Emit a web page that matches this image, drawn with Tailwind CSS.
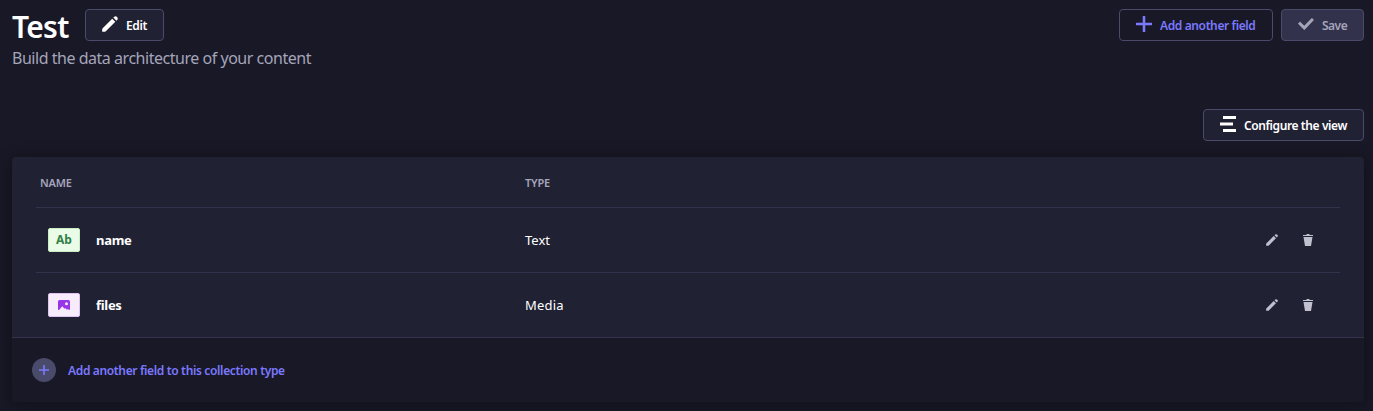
<!DOCTYPE html>
<html lang="en">
<head>
<meta charset="utf-8">
<title>Test</title>
<script src="https://cdn.jsdelivr.net/npm/@tailwindcss/browser@4"></script>
</head>
<body class="bg-[#181826] font-['Noto_Sans','Open_Sans',sans-serif] text-white h-[411px] overflow-hidden">
<svg class="hidden">
  <symbol id="pencil" viewBox="0 0 16 16"><path d="M12.300 .7a2.150 2.150 0 0 1 3 3l-.9 1-3.100-3.100 1-.9ZM10.200 2.700l3.100 3.100L3.800 15.300 3 15.800H.2V13l.5-.8 9.500-9.500Z"/></symbol>
  <symbol id="plus" viewBox="0 0 24 24"><path d="M24 13.604a.3.3 0 0 1-.3.3h-9.795V23.7a.3.3 0 0 1-.3.3h-3.21a.3.3 0 0 1-.3-.3v-9.795H.3a.3.3 0 0 1-.3-.3v-3.21a.3.3 0 0 1 .3-.3h9.795V.3a.3.3 0 0 1 .3-.3h3.21a.3.3 0 0 1 .3.3v9.795H23.7a.3.3 0 0 1 .3.3v3.21Z"/></symbol>
  <symbol id="trash" viewBox="0 0 24 24"><path d="M3.236 6.149a.2.2 0 0 0-.197.233L6 24h12l2.96-17.618a.2.2 0 0 0-.196-.233H3.236ZM21.8 1.983c.11 0 .2.09.2.2v1.584a.2.2 0 0 1-.2.2H2.2a.2.2 0 0 1-.2-.2V2.183c0-.11.09-.2.2-.2h5.511c.9 0 1.631-1.09 1.631-1.983h5.316c0 .894.73 1.983 1.631 1.983H21.8Z"/></symbol>
</svg>
<header class="flex justify-between pl-3 pr-[9px] pt-[9px] h-[109px]">
  <div>
    <div class="flex items-start h-9">
      <h1 class="w-[73px] text-[30px] leading-9 font-semibold tracking-[-0.7px] whitespace-nowrap">Test</h1>
      <button class="flex items-center h-8 w-[79px] pl-4 gap-2 rounded border border-[#4a4a6a] bg-[#212134] text-xs font-semibold whitespace-nowrap">
        <svg class="size-4 mb-0.5 fill-white"><use href="#pencil"/></svg><span class="pt-0.5 tracking-[-0.4px]">Edit</span>
      </button>
    </div>
    <p class="pt-px text-base leading-6 text-[#a5a5ba] tracking-[-0.47px] whitespace-nowrap">Build the data architecture of your content</p>
  </div>
  <div class="flex gap-2">
    <button class="flex items-center h-8 w-[154px] pl-4 gap-2 rounded border border-[#4a4a6a] text-[#7b79ff] text-xs font-semibold whitespace-nowrap">
      <svg class="size-4 mb-0.5 fill-[#7b79ff]"><use href="#plus"/></svg><span class="pt-0.5 tracking-[-0.38px]">Add another field</span>
    </button>
    <button class="flex items-center h-8 w-[83px] pl-4 gap-2 rounded border border-[#4a4a6a] bg-[#32324d] text-[#a5a5ba] text-xs font-semibold whitespace-nowrap">
      <svg class="size-4 mb-0.5 fill-[#a5a5ba]" viewBox="0 0 24 24"><path d="M20.727 2.97a.2.2 0 0 1 .286 0l2.85 2.89a.2.2 0 0 1 0 .28L9.554 20.854a.2.2 0 0 1-.285 0l-9.13-9.243a.2.2 0 0 1 0-.281l2.85-2.892a.2.2 0 0 1 .284 0l6.14 6.209L20.726 2.97Z"/></svg><span class="pt-0.5 tracking-[-0.5px]">Save</span>
    </button>
  </div>
</header>
<div class="flex justify-end pr-[9px] h-12">
  <button class="flex items-center h-8 w-[161px] pl-4 gap-2 rounded border border-[#4a4a6a] bg-[#212134] text-xs font-semibold whitespace-nowrap">
    <svg class="size-4 mb-0.5 fill-white" viewBox="0 0 16 16"><path d="M3 0h13v3H3zM0 6.500h13v3H0zM3 13h13v3H3z"/></svg><span class="pt-0.5 tracking-[-0.4px]">Configure the view</span>
  </button>
</div>
<main class="ml-3 mr-[9px] h-[245px] rounded shadow-[0_2px_15px_rgba(3,3,5,0.35)]">
  <section class="h-[180px] px-6 rounded-t bg-[#212134]">
    <div class="flex items-center h-[51px] pt-0.5 pl-1 border-b border-[#32324d] text-[11px] font-semibold text-[#a5a5ba]">
      <span class="w-[485px]"><span class="tracking-[-0.2px]">NAME</span></span><span class="tracking-[-0.2px]">TYPE</span>
    </div>
    <div class="flex items-center h-[65px] pl-3 pr-[26px] border-b border-[#32324d] text-[13px]">
      <span class="flex items-center justify-center w-8 h-6 rounded-[2px] border border-[#c6f0c2] bg-[#eafbe7] text-[#328048] text-xs font-bold">Ab</span>
      <span class="w-[429px] ml-4 pt-0.5 font-bold"><span class="tracking-[-0.3px]">name</span></span>
      <span class="pt-0.5">Text</span>
      <span class="ml-auto flex gap-6"><svg class="size-3 fill-[#c0c0cf]"><use href="#pencil"/></svg><svg class="size-3 fill-[#c0c0cf]"><use href="#trash"/></svg></span>
    </div>
    <div class="flex items-center h-16 pl-3 pr-[26px] text-[13px]">
      <span class="flex items-center justify-center w-8 h-6 rounded-[2px] border border-[#e0c1f4] bg-[#f6ecfc]"><svg class="w-3 h-2.5 fill-[#9736e8]" viewBox="0 0 12 10"><path fill-rule="evenodd" d="M1.500 0h9A1.500 1.500 0 0 1 12 1.500V9.500l-1 .5-1-1-1.200.8L7.300 8l-.8.8L4.300 6.300 1.300 9.800 0 10V1.500A1.500 1.500 0 0 1 1.500 0ZM8.500 2.200a1.500 1.500 0 1 0 0 3 1.500 1.500 0 0 0 0-3Z"/></svg></span>
      <span class="w-[429px] ml-4 pt-0.5 font-bold"><span class="tracking-[-0.3px]">files</span></span>
      <span class="pt-0.5 tracking-[0.2px]">Media</span>
      <span class="ml-auto flex gap-6"><svg class="size-3 fill-[#c0c0cf]"><use href="#pencil"/></svg><svg class="size-3 fill-[#c0c0cf]"><use href="#trash"/></svg></span>
    </div>
  </section>
  <button class="flex items-center w-full h-[65px] pl-5 gap-3 border-t border-[#32324d] rounded-b bg-[#181826] text-xs font-semibold text-[#7b79ff] whitespace-nowrap">
    <span class="flex items-center justify-center size-6 rounded-full bg-[#4a4a6a]"><svg class="size-2.5 fill-[#7b79ff]"><use href="#plus"/></svg></span>
    <span class="pt-0.5 tracking-[-0.35px]">Add another field to this collection type</span>
  </button>
</main>
</body>
</html>
